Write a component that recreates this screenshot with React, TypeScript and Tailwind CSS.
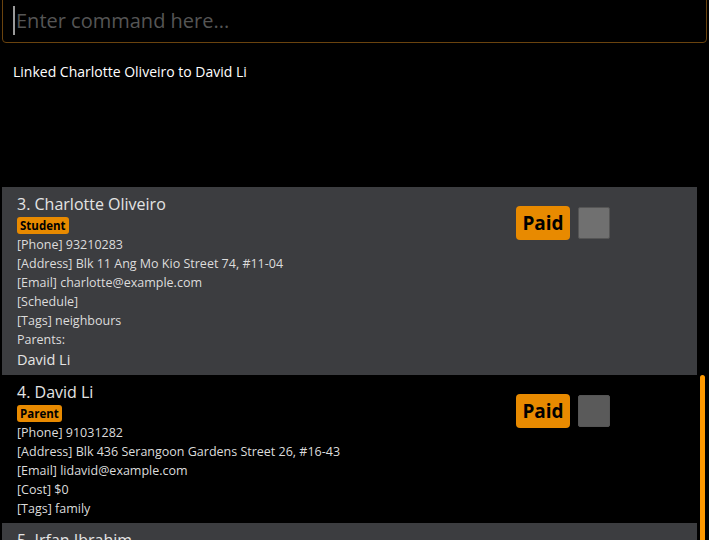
import React from 'react';

type Person = {
    index: number;
    name: string;
    role: string;
    lines: string[];
    parents?: string[];
    shade: boolean;
};

const people: Person[] = [
    {
        index: 3,
        name: 'Charlotte Oliveiro',
        role: 'Student',
        lines: ['[Phone] 93210283', '[Address] Blk 11 Ang Mo Kio Street 74, #11-04', '[Email] charlotte@example.com', '[Schedule]', '[Tags] neighbours'],
        parents: ['David Li'],
        shade: true,
    },
    {
        index: 4,
        name: 'David Li',
        role: 'Parent',
        lines: ['[Phone] 91031282', '[Address] Blk 436 Serangoon Gardens Street 26, #16-43', '[Email] lidavid@example.com', '[Cost] $0', '[Tags] family'],
        shade: false,
    },
    {
        index: 5,
        name: 'Irfan Ibrahim',
        role: 'Student',
        lines: ['[Phone] 92492021', '[Address] Blk 47 Tampines Street 20, #17-35'],
        shade: true,
    },
];

function PersonCard({ p }: { p: Person }) {
    return (
        <div className={`flex justify-between pl-[15px] pr-[87px] pt-[7px] pb-[5px] ${p.shade ? 'bg-[#3c3d40]' : 'bg-black'}`}>
            <div className="flex flex-col">
                <div className="text-[16px] leading-[20px] text-[#e4e4e4]">{p.index}. {p.name}</div>
                <div className="flex mt-[3px] mb-[1px]">
                    <span className="bg-[#e88a00] rounded-[3px] px-[3px] text-[11.5px] leading-[17px] font-bold text-black">{p.role}</span>
                </div>
                {p.lines.map(l => (
                    <div key={l} className="text-[12.5px] leading-[19px] text-[#dcdcdc]">{l}</div>
                ))}
                {p.parents && (
                    <>
                        <div className="text-[12.5px] leading-[19px] text-[#dcdcdc]">Parents:</div>
                        {p.parents.map(n => (
                            <div key={n} className="text-[14.5px] leading-[21px] text-[#e4e4e4]">{n}</div>
                        ))}
                    </>
                )}
            </div>
            <div className="flex items-start gap-[8px] pt-[12px]">
                <span className="bg-[#e88a00] rounded-[4px] w-[54px] h-[34px] flex items-center justify-center text-[19px] font-bold text-black">Paid</span>
                <span className={`w-[32px] h-[32px] mt-[1px] rounded-[2px] border border-[#555] ${p.shade ? 'bg-[#707070]' : 'bg-[#5a5a5a]'}`} />
            </div>
        </div>
    );
}

export default function App() {
    return (
        <div className="w-[709px] h-[540px] bg-black overflow-hidden flex flex-col" style={{ fontFamily: '"Open Sans", "Noto Sans", sans-serif' }}>
            <div className="mx-[2px] mt-[-6px] mr-[2px] h-[49px] border border-[#6a430e] rounded-[4px] flex items-end pb-[7px] pl-[10px]">
                <span className="w-[2px] h-[29px] bg-[#9a9a9a] mr-[1px]" />
                <span className="text-[20px] leading-[29px] text-[#555555]">Enter command here...</span>
            </div>
            <div className="h-[144px] pt-[19px] pl-[13px] text-[14px] leading-[20px] text-white">Linked Charlotte Oliveiro to David Li</div>
            <div className="flex flex-1 min-h-0">
                <div className="w-[695px] ml-[2px] flex flex-col overflow-hidden">
                    {people.map(p => (
                        <PersonCard key={p.index} p={p} />
                    ))}
                </div>
                <div className="ml-[3px] w-[5px] flex flex-col">
                    <div className="h-[188px]" />
                    <div className="flex-1 bg-[#ff9900] rounded-t-[3px]" />
                </div>
            </div>
        </div>
    );
}
